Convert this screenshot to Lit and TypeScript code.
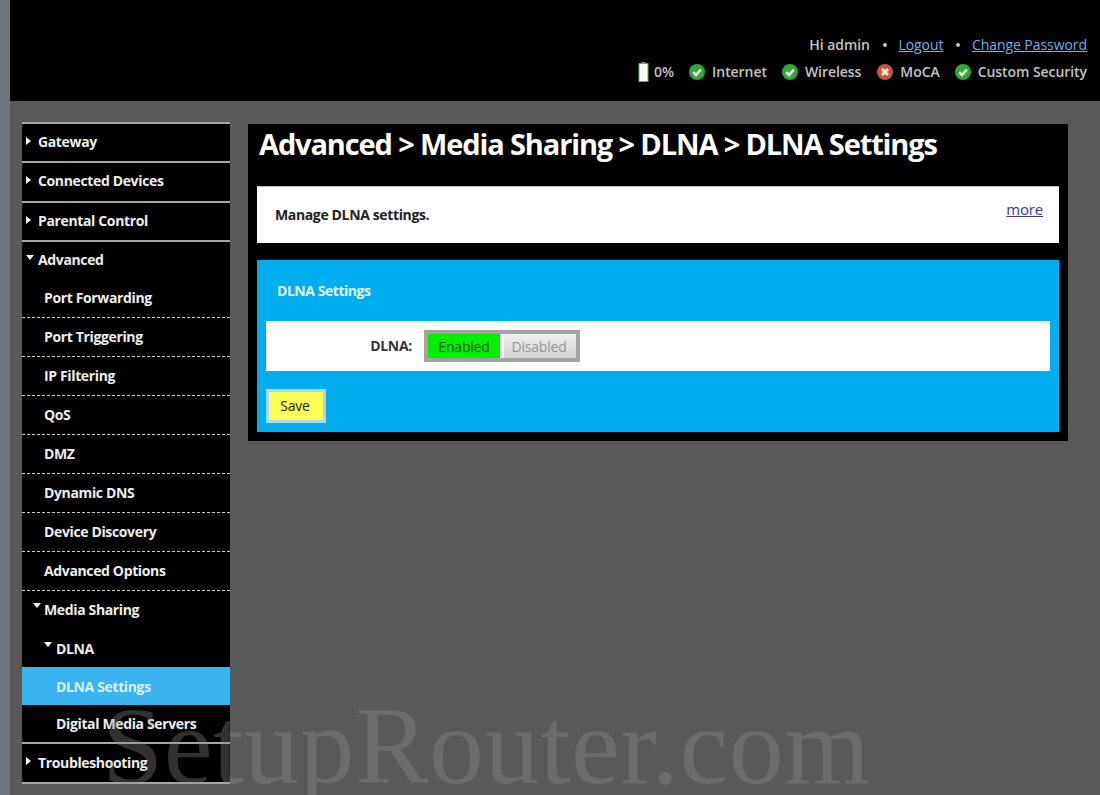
import { LitElement, html, css } from "lit";
import { customElement } from "lit/decorators.js";

const check = html`<svg class="ic" viewBox="0 0 16 16"><circle cx="8" cy="8" r="8" fill="#2fa83a"/><path d="M4.2 8.2 7 11 11.8 5.6" fill="none" stroke="#e8f5e8" stroke-width="2.6"/></svg>`;
const cross = html`<svg class="ic" viewBox="0 0 16 16"><circle cx="8" cy="8" r="8" fill="#c9553a"/><path d="M5 5 11 11M11 5 5 11" fill="none" stroke="#f6e6e0" stroke-width="2.8"/></svg>`;

type Row = { t: string; cls: string; arrow?: "r" | "d" };
const rows: Row[] = [
  { t: "Gateway", cls: "top", arrow: "r" },
  { t: "Connected Devices", cls: "top tall", arrow: "r" },
  { t: "Parental Control", cls: "top", arrow: "r" },
  { t: "Advanced", cls: "top", arrow: "d" },
  { t: "Port Forwarding", cls: "sub dash" },
  { t: "Port Triggering", cls: "sub dash" },
  { t: "IP Filtering", cls: "sub dash" },
  { t: "QoS", cls: "sub dash" },
  { t: "DMZ", cls: "sub dash" },
  { t: "Dynamic DNS", cls: "sub dash" },
  { t: "Device Discovery", cls: "sub dash" },
  { t: "Advanced Options", cls: "sub dash" },
  { t: "Media Sharing", cls: "sub", arrow: "d" },
  { t: "DLNA", cls: "sub2 thin", arrow: "d" },
  { t: "DLNA Settings", cls: "sub2 active" },
  { t: "Digital Media Servers", cls: "sub2 thin" },
  { t: "Troubleshooting", cls: "top last", arrow: "r" },
];

@customElement("app-root")
export class AppRoot extends LitElement {
  static styles = css`
    :host { display: block; position: relative; width: 1100px; height: 795px; overflow: hidden; background: #595959; font-family: "Open Sans", "Liberation Sans", sans-serif; }
    .shell { height: 795px; margin-left: 10px; background: #595959; }
    .strip { position: absolute; left: 0; top: 0; width: 10px; height: 795px; background: #6d757c; }
    header { height: 101px; background: #000; box-sizing: border-box; padding: 35px 13px 0 0; display: flex; flex-direction: column; align-items: flex-end; color: #c4c4c4; font-size: 14px; font-weight: 600; letter-spacing: -0.06px; }
    .line { display: flex; align-items: center; height: 19px; }
    .line.two { margin-top: 8px; }
    .line a { color: #6cb2ea; text-decoration: underline; font-weight: 400; letter-spacing: -0.06px; }
    .dot { width: 4px; height: 4px; border-radius: 50%; background: #c4c4c4; margin: 0 11.5px 0 13px; }
    .st { display: flex; align-items: center; gap: 7px; margin-left: 15px; }
    .st.pct { margin-left: 5px; }
    .st.wide { margin-left: 16px; }
    .ic { width: 16px; height: 16px; flex: none; }
    .bat { width: 11px; height: 20px; flex: none; }
    .body { display: flex; align-items: flex-start; padding: 21px 0 0 12px; }
    nav { width: 208px; flex: none; background: #000; color: #eee; font-size: 14px; font-weight: 700; letter-spacing: -0.36px; }
    .row { height: 39px; box-sizing: border-box; display: flex; align-items: center; position: relative; padding-bottom: 2px; }
    .row.top { border-top: 2px solid #a6a6a6; padding-left: 16px; }
    .row.tall { height: 40px; padding-bottom: 4px; }
    .row.last { height: 42px; border-bottom: 2px solid #a6a6a6; }
    .row.sub { padding-left: 22px; }
    .row.sub2 { padding-left: 34px; height: 38px; padding-bottom: 0; }
    .row.thin { height: 37px; }
    .row.dash { border-bottom: 1px dashed #ccc; }
    .row.active { background: #3ab4ef; color: #d9f2ff; }
    .arrow { position: absolute; width: 0; height: 0; }
    .arrow.r { border-left: 5px solid #fff; border-top: 4px solid transparent; border-bottom: 4px solid transparent; top: 13px; left: 4px; }
    .arrow.d { border-top: 5px solid #fff; border-left: 4px solid transparent; border-right: 4px solid transparent; top: 13px; left: 4px; }
    .sub .arrow.d { left: 11px; top: 12px; }
    .sub2 .arrow.d { left: 22px; top: 12px; }
    main { width: 820px; margin: 2px 0 0 18px; background: #000; box-sizing: border-box; padding: 0 9px 9px; }
    h1 { margin: 0; height: 62px; box-sizing: border-box; padding: 0 0 0 2px; color: #fff; font-size: 29px; line-height: 40px; font-weight: 700; letter-spacing: -1.13px; }
    .intro { height: 57px; background: #fff; border-top: 1px solid #bbb; box-sizing: border-box; display: flex; justify-content: space-between; padding: 0 16px 0 18px; color: #222; font-size: 14px; font-weight: 700; letter-spacing: -0.36px; }
    .intro span { margin-top: 18px; line-height: 20px; }
    .intro a { margin-top: 12px; line-height: 20px; color: #3a3a8c; text-decoration: underline; font-weight: 400; font-size: 15px; letter-spacing: -0.2px; }
    .panel { margin-top: 17px; height: 172px; background: #00aeef; box-sizing: border-box; padding: 0 9px; }
    .panel h2 { margin: 0; height: 61px; box-sizing: border-box; padding: 21px 0 0 11px; color: #e8f7ff; font-size: 14px; line-height: 20px; font-weight: 700; letter-spacing: -0.45px; }
    .field { height: 50px; background: #fff; display: flex; align-items: center; }
    .field label { width: 146px; text-align: right; color: #333; font-size: 14px; font-weight: 700; letter-spacing: -0.3px; line-height: 20px; }
    .toggle { margin-left: 12px; display: flex; gap: 4px; background: #fff; border: 4px solid #a3a3a3; height: 24px; }
    .toggle div { width: 72px; height: 24px; box-sizing: border-box; padding-top: 1px; line-height: 24px; text-align: center; font-size: 14px; letter-spacing: -0.2px; }
    .on { background: #00f000; color: #115511; }
    .toggle .off { padding-right: 2px; background: linear-gradient(#f0f0f0, #d2d2d2); color: #959595; }
    .save { display: block; margin-top: 18px; width: 60px; height: 34px; box-sizing: border-box; border: 3px solid #a9d9ef; background: #ffff55; color: #222; font: 400 14px "Open Sans", sans-serif; letter-spacing: -0.2px; padding: 0 2px 2px 0; }
    .mark { position: absolute; left: 102px; top: 684px; font-family: "Liberation Serif", serif; font-size: 110px; line-height: 125px; color: rgba(150,150,150,0.33); white-space: nowrap; pointer-events: none; letter-spacing: 0.5px; }
  `;
  render() {
    return html`
      <div class="strip"></div>
      <div class="shell">
        <header>
          <div class="line">Hi admin<span class="dot"></span><a>Logout</a><span class="dot"></span><a>Change Password</a></div>
          <div class="line two">
            <svg class="bat" viewBox="0 0 10 20"><rect x="3" y="0" width="4" height="2" fill="#5fae5f"/><rect x="0.5" y="1.5" width="9" height="18" fill="#f2fff2" stroke="#5fae5f"/></svg>
            <span class="st pct">0%</span>
            <span class="st">${check}Internet</span>
            <span class="st">${check}Wireless</span>
            <span class="st wide">${cross}MoCA</span>
            <span class="st">${check}Custom Security</span>
          </div>
        </header>
        <div class="body">
          <nav>
            ${rows.map((r) => html`<div class="row ${r.cls}">${r.arrow ? html`<i class="arrow ${r.arrow}"></i>` : ""}${r.t}</div>`)}
          </nav>
          <main>
            <h1>Advanced &gt; Media Sharing &gt; DLNA &gt; DLNA Settings</h1>
            <div class="intro"><span>Manage DLNA settings.</span><a>more</a></div>
            <div class="panel">
              <h2>DLNA Settings</h2>
              <div class="field">
                <label>DLNA:</label>
                <div class="toggle"><div class="on">Enabled</div><div class="off">Disabled</div></div>
              </div>
              <button class="save">Save</button>
            </div>
          </main>
        </div>
      </div>
      <div class="mark">SetupRouter.com</div>
    `;
  }
}
